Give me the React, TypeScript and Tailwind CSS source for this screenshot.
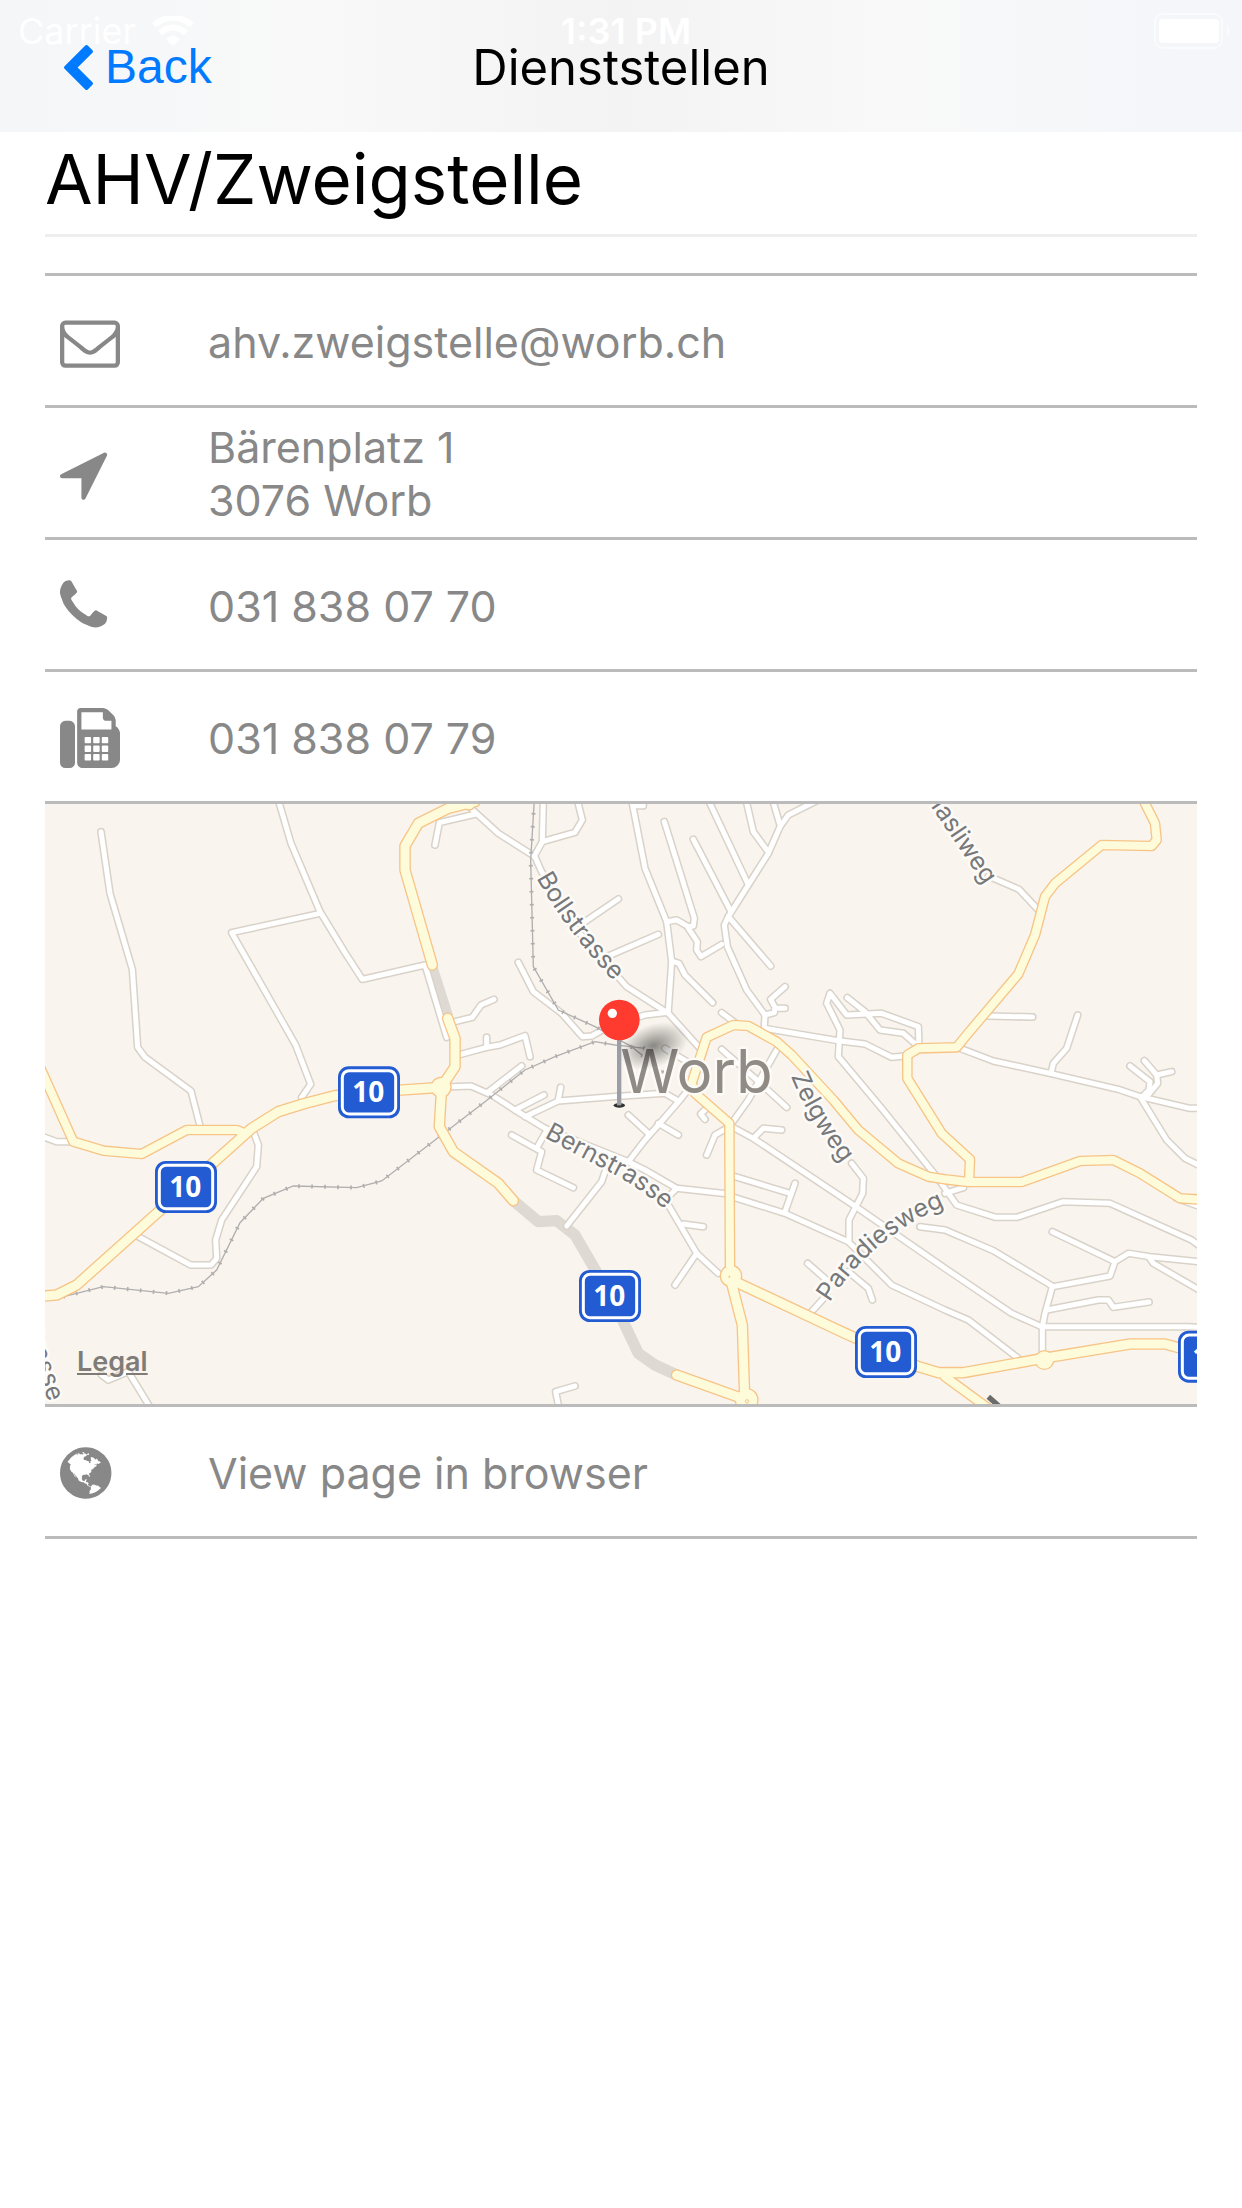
import type { ReactNode } from "react";

const ICONS = {
  back: {
    viewBox: "410 26 1036 1612",
    d: "M1427 301l-531 531 531 531q19 19 19 45t-19 45l-166 166q-19 19-45 19t-45-19l-742-742q-19-19-19-45t19-45l742-742q19-19 45-19t45 19l166 166q19 19 19 45t-19 45z",
  },
  mail: {
    viewBox: "0 0 1792 1792",
    d: "M1664 1504v-768q-32 36-69 66-268 206-426 338-51 43-83 67t-86.5 48.5-102.5 24.5h-2q-48 0-102.5-24.5t-86.5-48.5-83-67q-158-132-426-338-37-30-69-66v768q0 13 9.5 22.5t22.5 9.5h1472q13 0 22.5-9.5t9.5-22.5zm0-1051v-24.5l-.5-13-3-12.5-5.5-9-9-7.5-14-2.5h-1472q-13 0-22.5 9.5t-9.5 22.5q0 168 147 284 193 152 401 317 6 5 35 29.5t46 37.5 44.5 31.5 50.5 27.5 43 9h2q20 0 43-9t50.5-27.5 44.5-31.5 46-37.5 35-29.5q208-165 401-317 54-43 100.5-115.5t46.5-131.5zm128-37v1088q0 66-47 113t-113 47h-1472q-66 0-113-47t-47-113v-1088q0-66 47-113t113-47h1472q66 0 113 47t47 113z",
  },
  location: {
    viewBox: "192 0 1792 1792",
    d: "M1593 349l-640 1280q-17 35-57 35-5 0-15-2-22-5-35.5-22.5t-13.5-39.5v-576h-576q-22 0-39.5-13.5t-22.5-35.5 4-42 29-30l1280-640q13-7 29-7 27 0 45 19 15 14 18.5 34.5t-6.5 39.5z",
  },
  phone: {
    viewBox: "192 0 1792 1792",
    d: "M1600 1240q0 27-10 70.5t-21 68.5q-21 50-122 106-94 51-186 51-27 0-53-3.5t-57.5-12.5-47-14.5-55.5-20.5-49-18q-98-35-175-83-127-79-264-216t-216-264q-48-77-83-175-3-9-18-49t-20.5-55.5-14.5-47-12.5-57.5-3.5-53q0-92 51-186 56-101 106-122 25-11 68.5-21t70.5-10q14 0 21 3 18 6 53 76 11 19 30 54t35 63.5 31 53.5q3 4 17.5 25t21.5 35.5 7 28.5q0 20-28.5 50t-62 55-62 53-28.5 46q0 9 5 22.5t8.5 20.5 14 24 11.5 19q76 137 174 235t235 174q2 1 19 11.5t24 14 20.5 8.5 22.5 5q18 0 46-28.5t53-62 55-62 50-28.5q14 0 28.5 7t35.5 21.5 25 17.5q25 15 53.5 31t63.5 35 54 30q70 35 76 53 3 7 3 21z",
  },
  fax: {
    viewBox: "0 0 1792 1792",
    d: "M288 384q66 0 113 47t47 113v1088q0 66-47 113t-113 47h-128q-66 0-113-47t-47-113v-1088q0-66 47-113t113-47h128zm1376 163q58 34 93 93t35 128v768q0 106-75 181t-181 75h-864q-66 0-113-47t-47-113v-1536q0-40 28-68t68-28h672q40 0 88 20t76 48l152 152q28 28 48 76t20 88v163zm-736 989v-128q0-14-9-23t-23-9h-128q-14 0-23 9t-9 23v128q0 14 9 23t23 9h128q14 0 23-9t9-23zm0-256v-128q0-14-9-23t-23-9h-128q-14 0-23 9t-9 23v128q0 14 9 23t23 9h128q14 0 23-9t9-23zm0-256v-128q0-14-9-23t-23-9h-128q-14 0-23 9t-9 23v128q0 14 9 23t23 9h128q14 0 23-9t9-23zm256 512v-128q0-14-9-23t-23-9h-128q-14 0-23 9t-9 23v128q0 14 9 23t23 9h128q14 0 23-9t9-23zm0-256v-128q0-14-9-23t-23-9h-128q-14 0-23 9t-9 23v128q0 14 9 23t23 9h128q14 0 23-9t9-23zm0-256v-128q0-14-9-23t-23-9h-128q-14 0-23 9t-9 23v128q0 14 9 23t23 9h128q14 0 23-9t9-23zm256 512v-128q0-14-9-23t-23-9h-128q-14 0-23 9t-9 23v128q0 14 9 23t23 9h128q14 0 23-9t9-23zm0-256v-128q0-14-9-23t-23-9h-128q-14 0-23 9t-9 23v128q0 14 9 23t23 9h128q14 0 23-9t9-23zm0-256v-128q0-14-9-23t-23-9h-128q-14 0-23 9t-9 23v128q0 14 9 23t23 9h128q14 0 23-9t9-23zm96-384v-256h-160q-40 0-68-28t-28-68v-160h-640v512h896z",
  },
  globe: {
    viewBox: "128 0 1792 1792",
    d: "M896 128q209 0 385.5 103t279.5 279.5 103 385.5-103 385.5-279.5 279.5-385.5 103-385.5-103-279.5-279.5-103-385.5 103-385.5 279.5-279.5 385.5-103zm274 521q-2 1-9.5 9.5t-13.5 9.5q2 0 4.5-5t5-11 3.5-7q6-7 22-15 14-6 52-12 34-8 51 11-2-2 9.5-13t14.5-12q3-2 15-4.5t15-7.5l2-22q-12 1-17.5-7t-6.5-21q0 2-6 8 0-7-4.5-8t-11.5 1-9 1q-10-3-15-7.5t-8-16.5-4-15q-2-5-9.5-11t-9.5-10q-1-2-2.5-5.5t-3-6.5-4-5.5-5.5-2.5-7 5-7.5 10-4.5 5q-3-2-6-1.5t-4.5 1-4.5 3-5 3.5q-3 2-8.5 3t-8.5 2q15-5-1-11-10-4-16-3 9-4 7.5-12t-8.5-14h5q-1-4-8.5-8.5t-17.5-8.5-13-6q-8-5-34-9.5t-33-.5q-5 6-4.5 10.5t4 14 3.5 12.5q1 6-5.5 13t-6.5 12q0 7 14 15.5t10 21.5q-3 8-16 16t-16 12q-5 8-1.5 18.5t10.5 16.5q2 2 1.5 4t-3.5 4.5-5.5 4-6.5 3.5l-3 2q-11 5-20.5-6t-13.5-26q-7-25-16-30-23-8-29 1-5-13-41-26-25-9-58-4 6-1 0-15-7-15-19-12 3-6 4-17.5t1-13.5q3-13 12-23 1-1 7-8.5t9.5-13.5.5-6q35 4 50-11 5-5 11.5-17t10.5-17q9-6 14-5.5t14.5 5.5 14.5 5q14 1 15.5-11t-7.5-20q12 1 3-17-4-7-8-9-12-4-27 5-8 4 2 8-1-1-9.5 10.5t-16.5 17.5-16-5q-1-1-5.5-13.5t-9.5-13.5q-8 0-16 15 3-8-11-15t-24-8q19-12-8-27-7-4-20.5-5t-19.5 4q-5 7-5.5 11.5t5 8 10.5 5.5 11.5 4 8.5 3q14 10 8 14-2 1-8.5 3.5t-11.5 4.5-6 4q-3 4 0 14t-2 14q-5-5-9-17.5t-7-16.5q7 9-25 6l-10-1q-4 0-16 2t-20.5 1-13.5-8q-4-8 0-20 1-4 4-2-4-3-11-9.5t-10-8.5q-46 15-94 41 6 1 12-1 5-2 13-6.5t10-5.5q34-14 42-7l5-5q14 16 20 25-7-4-30-1-20 6-22 12 7 12 5 18-4-3-11.5-10t-14.5-11-15-5q-16 0-22 1-146 80-235 222 7 7 12 8 4 1 5 9t2.5 11 11.5-3q9 8 3 19 1-1 44 27 19 17 21 21 3 11-10 18-1-2-9-9t-9-4q-3 5 .5 18.5t10.5 12.5q-7 0-9.5 16t-2.5 35.5-1 23.5l2 1q-3 12 5.5 34.5t21.5 19.5q-13 3 20 43 6 8 8 9 3 2 12 7.5t15 10 10 10.5q4 5 10 22.5t14 23.5q-2 6 9.5 20t10.5 23q-1 0-2.5 1t-2.5 1q3 7 15.5 14t15.5 13q1 3 2 10t3 11 8 2q2-20-24-62-15-25-17-29-3-5-5.5-15.5t-4.5-14.5q2 0 6 1.5t8.5 3.5 7.5 4 2 3q-3 7 2 17.5t12 18.5 17 19 12 13q6 6 14 19.5t0 13.5q9 0 20 10.5t17 19.5q5 8 8 26t5 24q2 7 8.5 13.5t12.5 9.5l16 8 13 7q5 2 18.5 10.5t21.5 11.5q10 4 16 4t14.5-2.5 13.5-3.5q15-2 29 15t21 21q36 19 55 11-2 1 .5 7.5t8 15.5 9 14.5 5.5 8.5q5 6 18 15t18 15q6-4 7-9-3 8 7 20t18 10q14-3 14-32-31 15-49-18 0-1-2.5-5.5t-4-8.5-2.5-8.5 0-7.5 5-3q9 0 10-3.5t-2-12.5-4-13q-1-8-11-20t-12-15q-5 9-16 8t-16-9q0 1-1.5 5.5t-1.5 6.5q-13 0-15-1 1-3 2.5-17.5t3.5-22.5q1-4 5.5-12t7.5-14.5 4-12.5-4.5-9.5-17.5-2.5q-19 1-26 20-1 3-3 10.5t-5 11.5-9 7q-7 3-24 2t-24-5q-13-8-22.5-29t-9.5-37q0-10 2.5-26.5t3-25-5.5-24.5q3-2 9-9.5t10-10.5q2-1 4.5-1.5t4.5 0 4-1.5 3-6q-1-1-4-3-3-3-4-3 7 3 28.5-1.5t27.5 1.5q15 11 22-2 0-1-2.5-9.5t-.5-13.5q5 27 29 9 3 3 15.5 5t17.5 5q3 2 7 5.5t5.5 4.5 5-.5 8.5-6.5q10 14 12 24 11 40 19 44 7 3 11 2t4.5-9.5 0-14-1.5-12.5l-1-8v-18l-1-8q-15-3-18.5-12t1.5-18.5 15-18.5q1-1 8-3.5t15.5-6.5 12.5-8q21-19 15-35 7 0 11-9-1 0-5-3t-7.5-5-4.5-2q9-5 2-16 5-3 7.5-11t7.5-10q9 12 21 2 7-8 1-16 5-7 20.5-10.5t18.5-9.5q7 2 8-2t1-12 3-12q4-5 15-9t13-5l17-11q3-4 0-4 18 2 31-11 10-11-6-20 3-6-3-9.5t-15-5.5q3-1 11.5-.5t10.5-1.5q15-10-7-16-17-5-43 12zm-163 877q206-36 351-189-3-3-12.5-4.5t-12.5-3.5q-18-7-24-8 1-7-2.5-13t-8-9-12.5-8-11-7q-2-2-7-6t-7-5.5-7.5-4.5-8.5-2-10 1l-3 1q-3 1-5.5 2.5t-5.5 3-4 3 0 2.5q-21-17-36-22-5-1-11-5.5t-10.5-7-10-1.5-11.5 7q-5 5-6 15t-2 13q-7-5 0-17.5t2-18.5q-3-6-10.5-4.5t-12 4.5-11.5 8.5-9 6.5-8.5 5.5-8.5 7.5q-3 4-6 12t-5 11q-2-4-11.5-6.5t-9.5-5.5q2 10 4 35t5 38q7 31-12 48-27 25-29 40-4 22 12 26 0 7-8 20.5t-7 21.5q0 6 2 16z",
  },
};

function Icon({ name, className }: { name: keyof typeof ICONS; className: string }) {
  return (
    <svg viewBox={ICONS[name].viewBox} fill="currentColor" className={className} aria-hidden="true">
      <path d={ICONS[name].d} />
    </svg>
  );
}

// Map geometry, three units to a pixel
const STREETS = [
  "168,95 195,280 262,508 278,742 300,772 438,873 465,978",
  "700,0 738,130 825,335 900,458 952,538 1140,495 1205,712",
  "825,340 560,398 752,735 797,853 770,892",
  "1170,135 1183,68 1293,42",
  "1283,30 1360,100 1470,170 1485,205 1560,350 1745,560 1870,640",
  "1495,0 1492,125 1467,170",
  "1492,125 1590,97 1612,60 1597,0",
  "1760,0 1800,205 1865,365 1880,485 1870,632",
  "1765,17 1795,17",
  "1720,297 1620,365",
  "1690,468 1840,403",
  "1420,487 1465,575 1550,640 1612,710 1640,708 1690,680 1800,645 1870,637",
  "1230,665 1282,652 1308,615 1347,598",
  "1240,765 1325,742 1365,735 1440,707 1455,770",
  "1325,742 1325,712",
  "1220,860 1278,858 1340,885 1410,930 1500,985 1750,1085",
  "1330,875 1430,798",
  "1410,930 1497,885",
  "1440,950 1540,903 1700,890 1860,880 1895,900",
  "1540,900 1547,862",
  "1400,1005 1490,1055 1475,1110 1585,1163",
  "1475,1045 1500,1000",
  "1565,1278 1670,1145 1680,1115",
  "1750,945 1810,1000",
  "1750,1085 1800,1020 1840,975 1905,900 1945,850",
  "1750,1085 1800,1110 1895,1165 2052,1182",
  "1840,970 1900,1005",
  "1860,745 1935,790",
  "1858,65 1948,355 1945,378 1930,380 1895,360 1865,365",
  "1930,385 1957,425 1955,450 1968,470 2030,433",
  "1945,118 2058,335",
  "1990,0 2108,250",
  "2103,0 2125,95 2165,150",
  "2183,0 2205,75",
  "2320,0 2230,45 2205,80 2170,160 2108,258 2050,350 2038,375 2047,440 2105,570 2160,645 2158,680",
  "2050,350 2177,498",
  "1885,485 1902,490 1920,525 2003,608",
  "2030,638 2070,668",
  "1870,640 1965,745",
  "2160,645 2188,638 2190,622 2177,598 2220,560",
  "2190,625 2220,625",
  "2158,685 2380,722 2460,732 2540,772 2580,768",
  "2622,740 2620,680 2510,640 2405,645 2355,580 2345,610 2385,690 2380,770 2510,925 2675,1130 2735,1215 2852,1252 2915,1252 3055,1205 3195,1210 3440,1320 3480,1350",
  "2407,593 2460,635 2505,690 2575,700 2620,740",
  "2030,748 2130,835 2225,922",
  "2195,750 2110,900 2060,970",
  "2045,985 2010,1005 1985,1065",
  "1985,925 1967,942 1980,958",
  "2060,980 2125,1015 2440,1225 2700,1405 2900,1540 2990,1580 3430,1580 3480,1584",
  "2130,1010 2155,985 2210,990",
  "2070,1130 2235,1180",
  "2250,1150 2220,1235",
  "2060,1190 2220,1240 2410,1325 2540,1455 2700,1530 2770,1560 2920,1675",
  "2420,1090 2455,1135 2453,1180 2412,1260 2412,1320",
  "2300,1535 2345,1485",
  "2700,1180 2755,1163",
  "2288,1390 2345,1440",
  "2410,1415 2470,1465 2482,1500",
  "2625,1280 2700,1290 2845,1352 3025,1460 3195,1428 3210,1385 3250,1360 3315,1370 3480,1387",
  "3022,1295 3210,1385",
  "3312,1372 3325,1390 3480,1480",
  "3022,1460 3000,1540 2992,1580 2992,1670",
  "3005,1530 3160,1500 3190,1500 3205,1522 3312,1506",
  "2830,228 2922,268 2980,330",
  "2830,648 2963,651",
  "2745,745 2845,783 3015,820 3220,868 3285,890 3435,925 3480,925",
  "3018,820 3025,790 3065,745 3098,645",
  "3290,892 3312,870 3315,845 3255,798",
  "3305,890 3338,850 3335,825 3298,782",
  "3335,825 3380,815",
  "3285,890 3365,1020 3420,1075 3480,1105",
  "3395,1195 3480,1225",
  "1870,1215 1955,1360 2020,1420",
  "1915,1272 1975,1280",
  "1955,1360 1890,1455",
  "1895,1165 1870,1190",
  "-20,1005 35,1025 90,1025",
  "625,995 640,1035 635,1100 530,1260 512,1320 515,1375 498,1395 437,1395 280,1310",
  "170,1725 190,1740 250,1715 320,1830",
  "1545,1840 1532,1775 1590,1758",
];

const MAIN_ROADS = [
  "-30,1490 35,1485 95,1455 620,985 700,935 780,910 870,887 1070,870 1190,862",
  "1290,5 1210,25 1120,70 1080,138 1080,210 1162,495",
  "1208,655 1230,715 1230,800 1190,860 1183,980 1225,1055 1360,1150 1405,1202",
  "1895,1725 2105,1800",
  "2060,1440 2400,1600 2620,1700 2680,1718 2755,1718 2995,1675 3255,1632 3360,1632 3480,1665",
  "2055,1430 2070,1490 2092,1575 2100,1820",
];

const SIDE_ROADS = [
  "-20,790 85,1025 175,1052 290,1062 425,990 575,990 600,1000",
  "2055,1410 2053,970 1950,880 1940,850 1985,712 2065,675 2110,678 2195,725 2240,765 2365,900 2440,990 2560,1090 2650,1130 2700,1138 2770,1146 2930,1146 3105,1083 3205,1080 3285,1120 3405,1195 3480,1200",
  "2772,1146 2775,1078 2690,1000 2587,835 2587,765 2620,745 2735,742 2765,705 2920,522 2970,405 3000,290 3030,250 3170,135 3320,138 3335,120 3330,70 3295,0",
  "2700,1730 2830,1825",
];

const JUNCTIONS = [
  [1188, 862, 32],
  [2058, 1428, 34],
  [2998, 1680, 30],
  [2105, 1800, 36],
  [1272, 12, 20],
];

const TUNNELS = [
  "1160,500 1208,650",
  "1405,1202 1480,1265 1535,1262 1590,1305 1680,1460 1730,1555 1780,1660 1830,1695 1895,1725",
];

const RAILS = [
  "1468,0 1457,180 1465,500 1540,630 1650,680 1760,740 1870,830",
  "1800,745 1710,735 1650,725 1530,770 1440,810 1320,905 1010,1143 935,1163 745,1158 655,1195 585,1268 515,1410 460,1460 370,1480 175,1460 35,1495",
];

const LABELS = [
  { id: "boll", text: "Bollstrasse", d: "M1474 234 Q1572 410 1750 590" },
  { id: "bern", text: "Bernstrasse", d: "M1497 1012 L1720 1130 Q1810 1180 1900 1265" },
  { id: "zelg", text: "Zelgweg", d: "M2238 828 Q2290 960 2410 1115" },
  { id: "para", text: "Paradiesweg", d: "M2354 1508 Q2490 1290 2760 1195" },
];

// Streets that run in from outside the map, placed by where their names end
const EDGE_LABELS = [
  { id: "hasli", text: "Hasliweg", d: "M2570 -110 L2818 256" },
  { id: "edge", text: "strasse", d: "M-75 1545 Q-30 1680 10 1806" },
];

const SHIELDS = [
  [972, 877],
  [423, 1161],
  [1695, 1488],
  [2523, 1656],
  [3492, 1670],
];

function Lines({ items, color, width }: { items: string[]; color: string; width: number }) {
  return (
    <g fill="none" stroke={color} strokeWidth={width} strokeLinecap="round" strokeLinejoin="round">
      {items.map((points) => (
        <polyline key={points} points={points} />
      ))}
    </g>
  );
}

function TownMap() {
  return (
    <svg viewBox="0 12 3456 1800" className="block h-auto w-full bg-[#f9f5ee]" role="img" aria-label="Map of Worb">
      <defs>
        <radialGradient id="pin-shadow">
          <stop offset="0" stopColor="#000" stopOpacity="0.45" />
          <stop offset="1" stopColor="#000" stopOpacity="0" />
        </radialGradient>
        {[...LABELS, ...EDGE_LABELS].map((l) => (
          <path key={l.id} id={l.id} d={l.d} />
        ))}
      </defs>

      <g fill="none" stroke="#dedad3" strokeWidth={34} strokeLinejoin="round">
        {TUNNELS.map((points) => (
          <polyline key={points} points={points} />
        ))}
      </g>
      <Lines items={STREETS} color="#d9d2c9" width={24} />
      <Lines items={STREETS} color="#ffffff" width={15} />

      <g fill="none" stroke="#b0aeae">
        {RAILS.map((points) => (
          <g key={points}>
            <polyline points={points} strokeWidth={4} />
            <polyline points={points} strokeWidth={12} strokeDasharray="5 34" />
          </g>
        ))}
      </g>

      <Lines items={SIDE_ROADS} color="#f7c487" width={32} />
      <Lines items={MAIN_ROADS} color="#f7c487" width={35} />
      {JUNCTIONS.map(([x, y, r]) => (
        <circle key={x} cx={x} cy={y} r={r} fill="#f7c487" />
      ))}
      <Lines items={SIDE_ROADS} color="#fdfbda" width={24} />
      <Lines items={MAIN_ROADS} color="#fdfbda" width={27} />
      {JUNCTIONS.map(([x, y, r]) => (
        <circle key={x} cx={x} cy={y} r={r - 4} fill="#fdfbda" />
      ))}
      <circle cx={2053} cy={1430} r={3} fill="#f7c487" />
      <circle cx={2106} cy={1804} r={5} fill="none" stroke="#f7c487" strokeWidth={3} />
      <path d="M2830 1790l36 32" stroke="#6b6b6b" strokeWidth={16} />

      <g
        fill="#77787a"
        stroke="#fdfbf8"
        strokeWidth={14}
        strokeLinejoin="round"
        paintOrder="stroke"
        fontFamily="Inter, sans-serif"
        fontSize={75}
      >
        {LABELS.map((l) => (
          <text key={l.id}>
            <textPath href={`#${l.id}`}>{l.text}</textPath>
          </text>
        ))}
        {EDGE_LABELS.map((l) => (
          <text key={l.id} textAnchor="end">
            <textPath href={`#${l.id}`} startOffset="100%">
              {l.text}
            </textPath>
          </text>
        ))}
        <text x={1726} y={878} fontSize={180} fill="#918b86">
          Worb
        </text>
      </g>

      {SHIELDS.map(([x, y]) => (
        <g key={x}>
          <rect x={x - 93} y={y - 78} width={186} height={156} rx={32} fill="#235bd3" />
          <rect x={x - 80} y={y - 65} width={160} height={130} rx={20} fill="none" stroke="#fff" strokeWidth={9} />
          <text
            x={x - 2}
            y={y + 30}
            fontSize={84}
            fontWeight={700}
            fill="#fff"
            textAnchor="middle"
            fontFamily="'Noto Sans', sans-serif"
          >
            10
          </text>
        </g>
      ))}

      <ellipse cx={1825} cy={738} rx={110} ry={65} fill="url(#pin-shadow)" transform="rotate(-20 1825 738)" />
      <ellipse cx={1723} cy={916} rx={17} ry={7} fill="#333" />
      <rect x={1716} y={710} width={13} height={206} fill="#9b9fa5" />
      <circle cx={1723} cy={660} r={61} fill="#ff3b30" />
      <circle cx={1702} cy={640} r={14} fill="#fff" />
    </svg>
  );
}

function StatusBar() {
  return (
    <div className="absolute inset-x-0 top-0 grid h-[62px] grid-cols-3 items-center pr-2 pl-[18px] text-[36px] text-white">
      <div className="flex items-center gap-4">
        <span>Carrier</span>
        <svg viewBox="0 0 42 30" className="h-[30px] w-[42px]" aria-hidden="true">
          <path d="M21 30l-7-7q7-6 14 0z" fill="#fff" />
          <path d="M8 17q13-11 26 0M2 9q19-15 38 0" fill="none" stroke="#fff" strokeWidth={6} />
        </svg>
      </div>
      <span className="text-center font-semibold">1:31 PM</span>
      <svg viewBox="0 0 80 36" className="h-9 w-20 justify-self-end" aria-hidden="true">
        <rect x={1} y={1} width={67} height={34} rx={8} fill="none" stroke="#fff" strokeOpacity={0.5} strokeWidth={2} />
        <rect x={5} y={6} width={60} height={24} rx={4} fill="#fff" />
        <path d="M73 12q6 6 0 12z" fill="#fff" fillOpacity={0.6} />
      </svg>
    </div>
  );
}

function Row({ icon, href, children }: { icon: keyof typeof ICONS; href: string; children: ReactNode }) {
  return (
    <a
      href={href}
      className="flex h-[132px] items-center border-b-3 border-[#bbb] pt-[3px] pl-[15px] text-[43px] leading-[53px] text-[#888]"
    >
      <span className="w-[148px] shrink-0">
        <Icon name={icon} className="size-[60px]" />
      </span>
      <span>{children}</span>
    </a>
  );
}

export default function App() {
  return (
    <div className="min-h-screen bg-white font-['Inter',sans-serif]">
      <header className="relative h-[132px] bg-[linear-gradient(to_right,#f4f6f8,#f9f9f9_25%,#f3f3f3_50%,#f9f9f9_72%,#f4f6fa_95%)]">
        <StatusBar />
        <div className="relative grid h-[132px] grid-cols-3 items-center px-16">
          <button
            type="button"
            className="flex items-center gap-3 justify-self-start text-[48px] leading-[132px] text-[#007aff] font-['Liberation_Sans',sans-serif]"
          >
            <Icon name="back" className="h-[45px] w-[29px]" />
            <span>Back</span>
          </button>
          <span className="justify-self-center pt-[2px] text-[49px] leading-[132px]">Dienststellen</span>
        </div>
      </header>

      <main className="px-[45px]">
        <h1 className="border-b-3 border-[#eee] pb-2 text-[69px] leading-[94px] text-black">AHV/Zweigstelle</h1>

        <section className="mt-9 border-t-3 border-[#bbb]">
          <Row icon="mail" href="mailto:ahv.zweigstelle@worb.ch">
            ahv.zweigstelle@worb.ch
          </Row>
          <Row icon="location" href="#map">
            Bärenplatz 1
            <br />
            3076 Worb
          </Row>
          <Row icon="phone" href="tel:0318380770">
            031 838 07 70
          </Row>
          <Row icon="fax" href="tel:0318380779">
            031 838 07 79
          </Row>
          <div id="map" className="relative border-b-3 border-[#bbb]">
            <TownMap />
            <a
              href="#legal"
              className="absolute bottom-6 left-8 text-[27px] leading-9 font-semibold text-[#7f7c78] underline"
            >
              Legal
            </a>
          </div>
          <Row icon="globe" href="#browser">
            View page in browser
          </Row>
        </section>
      </main>
    </div>
  );
}
